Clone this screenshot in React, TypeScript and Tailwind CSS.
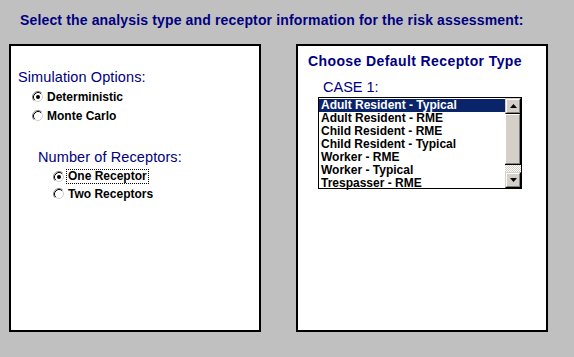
import React from "react";

function Radio({ checked }: { checked: boolean }) {
  return (
    <svg width="12" height="12" viewBox="0 0 12 12" className="shrink-0">
      <path d="M9.89 2.11 A5.5 5.5 0 0 0 2.11 9.89" fill="none" stroke="#808080" strokeWidth="1" />
      <path d="M2.11 9.89 A5.5 5.5 0 0 0 9.89 2.11" fill="none" stroke="#ffffff" strokeWidth="1" />
      <circle cx="6" cy="6" r="4.5" fill="#ffffff" />
      <path d="M9.18 2.82 A4.5 4.5 0 0 0 2.82 9.18" fill="none" stroke="#000000" strokeWidth="1" />
      <path d="M2.82 9.18 A4.5 4.5 0 0 0 9.18 2.82" fill="none" stroke="#d4d0c8" strokeWidth="1" />
      {checked && <circle cx="6" cy="6" r="2" fill="#000000" />}
    </svg>
  );
}

function ScrollButton({ up }: { up: boolean }) {
  return (
    <div className="h-[16px] w-[16px] bg-[#d4d0c8] border-t border-l border-t-[#d4d0c8] border-l-[#d4d0c8] border-r border-b border-r-black border-b-black">
      <div className="h-full w-full border-t border-l border-t-white border-l-white border-r border-b border-r-[#808080] border-b-[#808080] flex items-center justify-center">
        <svg width="7" height="4" viewBox="0 0 7 4">
          {up ? <path d="M3.5 0 L7 4 L0 4 Z" fill="#000" /> : <path d="M0 0 L7 0 L3.5 4 Z" fill="#000" />}
        </svg>
      </div>
    </div>
  );
}

export default function App() {
  const items = [
    "Adult Resident - Typical",
    "Adult Resident - RME",
    "Child Resident - RME",
    "Child Resident - Typical",
    "Worker - RME",
    "Worker - Typical",
    "Trespasser - RME",
  ];
  const font = { fontFamily: '"Liberation Sans", Arial, sans-serif' };
  return (
    <div className="w-[574px] h-[357px] bg-[#c0c0c0] overflow-hidden" style={font}>
      <div className="pt-[12px] pl-[20px] h-[16px] box-content text-[14px] leading-[16px] font-bold text-[#000080] whitespace-nowrap tracking-[0.15px]">
        Select the analysis type and receptor information for the risk assessment:
      </div>
      <div className="flex mt-[16px] ml-[9px] gap-[35px]">
        {/* Left panel */}
        <div className="w-[252px] h-[288px] bg-white border-2 border-black pt-[23px] pl-[7px]">
          <div className="text-[14.5px] leading-[16px] tracking-[0.1px] text-[#000080] whitespace-nowrap">Simulation Options:</div>
          <div className="mt-[2px] ml-[14px]">
            <div className="h-[19px] flex items-center gap-[3px]">
              <Radio checked />
              <span className="text-[12px] font-bold text-black leading-[14px]">Deterministic</span>
            </div>
            <div className="h-[19px] flex items-center gap-[3px]">
              <Radio checked={false} />
              <span className="text-[12px] font-bold text-black leading-[14px]">Monte Carlo</span>
            </div>
          </div>
          <div className="mt-[24px] ml-[20px] text-[14.5px] leading-[16px] tracking-[0.1px] text-[#000080] whitespace-nowrap">
            Number of Receptors:
          </div>
          <div className="mt-[3px] ml-[35px]">
            <div className="h-[17px] flex items-center gap-[1px]">
              <Radio checked />
              <span className="text-[12px] font-bold text-black leading-[13px] border border-dotted border-black px-[1px]">
                One Receptor
              </span>
            </div>
            <div className="h-[17px] flex items-center gap-[3px]">
              <Radio checked={false} />
              <span className="text-[12px] font-bold text-black leading-[14px]">Two Receptors</span>
            </div>
          </div>
        </div>
        {/* Right panel */}
        <div className="w-[252px] h-[288px] bg-white border-2 border-black pt-[7px] pl-[10px]">
          <div className="text-[14px] leading-[16px] font-bold text-[#000080] whitespace-nowrap tracking-[0.4px]">
            Choose Default Receptor Type
          </div>
          <div className="mt-[10px] ml-[15px] text-[14.5px] leading-[16px] text-[#000080]">CASE 1:</div>
          <div className="mt-[2px] ml-[10px] w-[204px] h-[92px] border border-black flex">
            <div className="flex-1 flex flex-col pt-[1px]">
              {items.map((it, i) => (
                <div
                  key={it}
                  className={
                    "h-[13px] pl-[2px] text-[12px] leading-[13px] font-bold whitespace-nowrap " +
                    (i === 0 ? "bg-[#0a246a] text-white" : "text-black")
                  }
                >
                  {it}
                </div>
              ))}
            </div>
            <div className="w-[16px] flex flex-col">
              <ScrollButton up />
              <div className="h-[51px] w-[16px] bg-[#d4d0c8] border-r border-b border-r-black border-b-black">
                <div className="h-full w-full border-t border-l border-t-white border-l-white border-r border-b border-r-[#808080] border-b-[#808080]" />
              </div>
              <div
                className="flex-1 w-[16px]"
                style={{
                  backgroundImage:
                    "repeating-conic-gradient(#ffffff 0% 25%, #d4d0c8 0% 50%)",
                  backgroundSize: "2px 2px",
                }}
              />
              <ScrollButton up={false} />
            </div>
          </div>
        </div>
      </div>
    </div>
  );
}
